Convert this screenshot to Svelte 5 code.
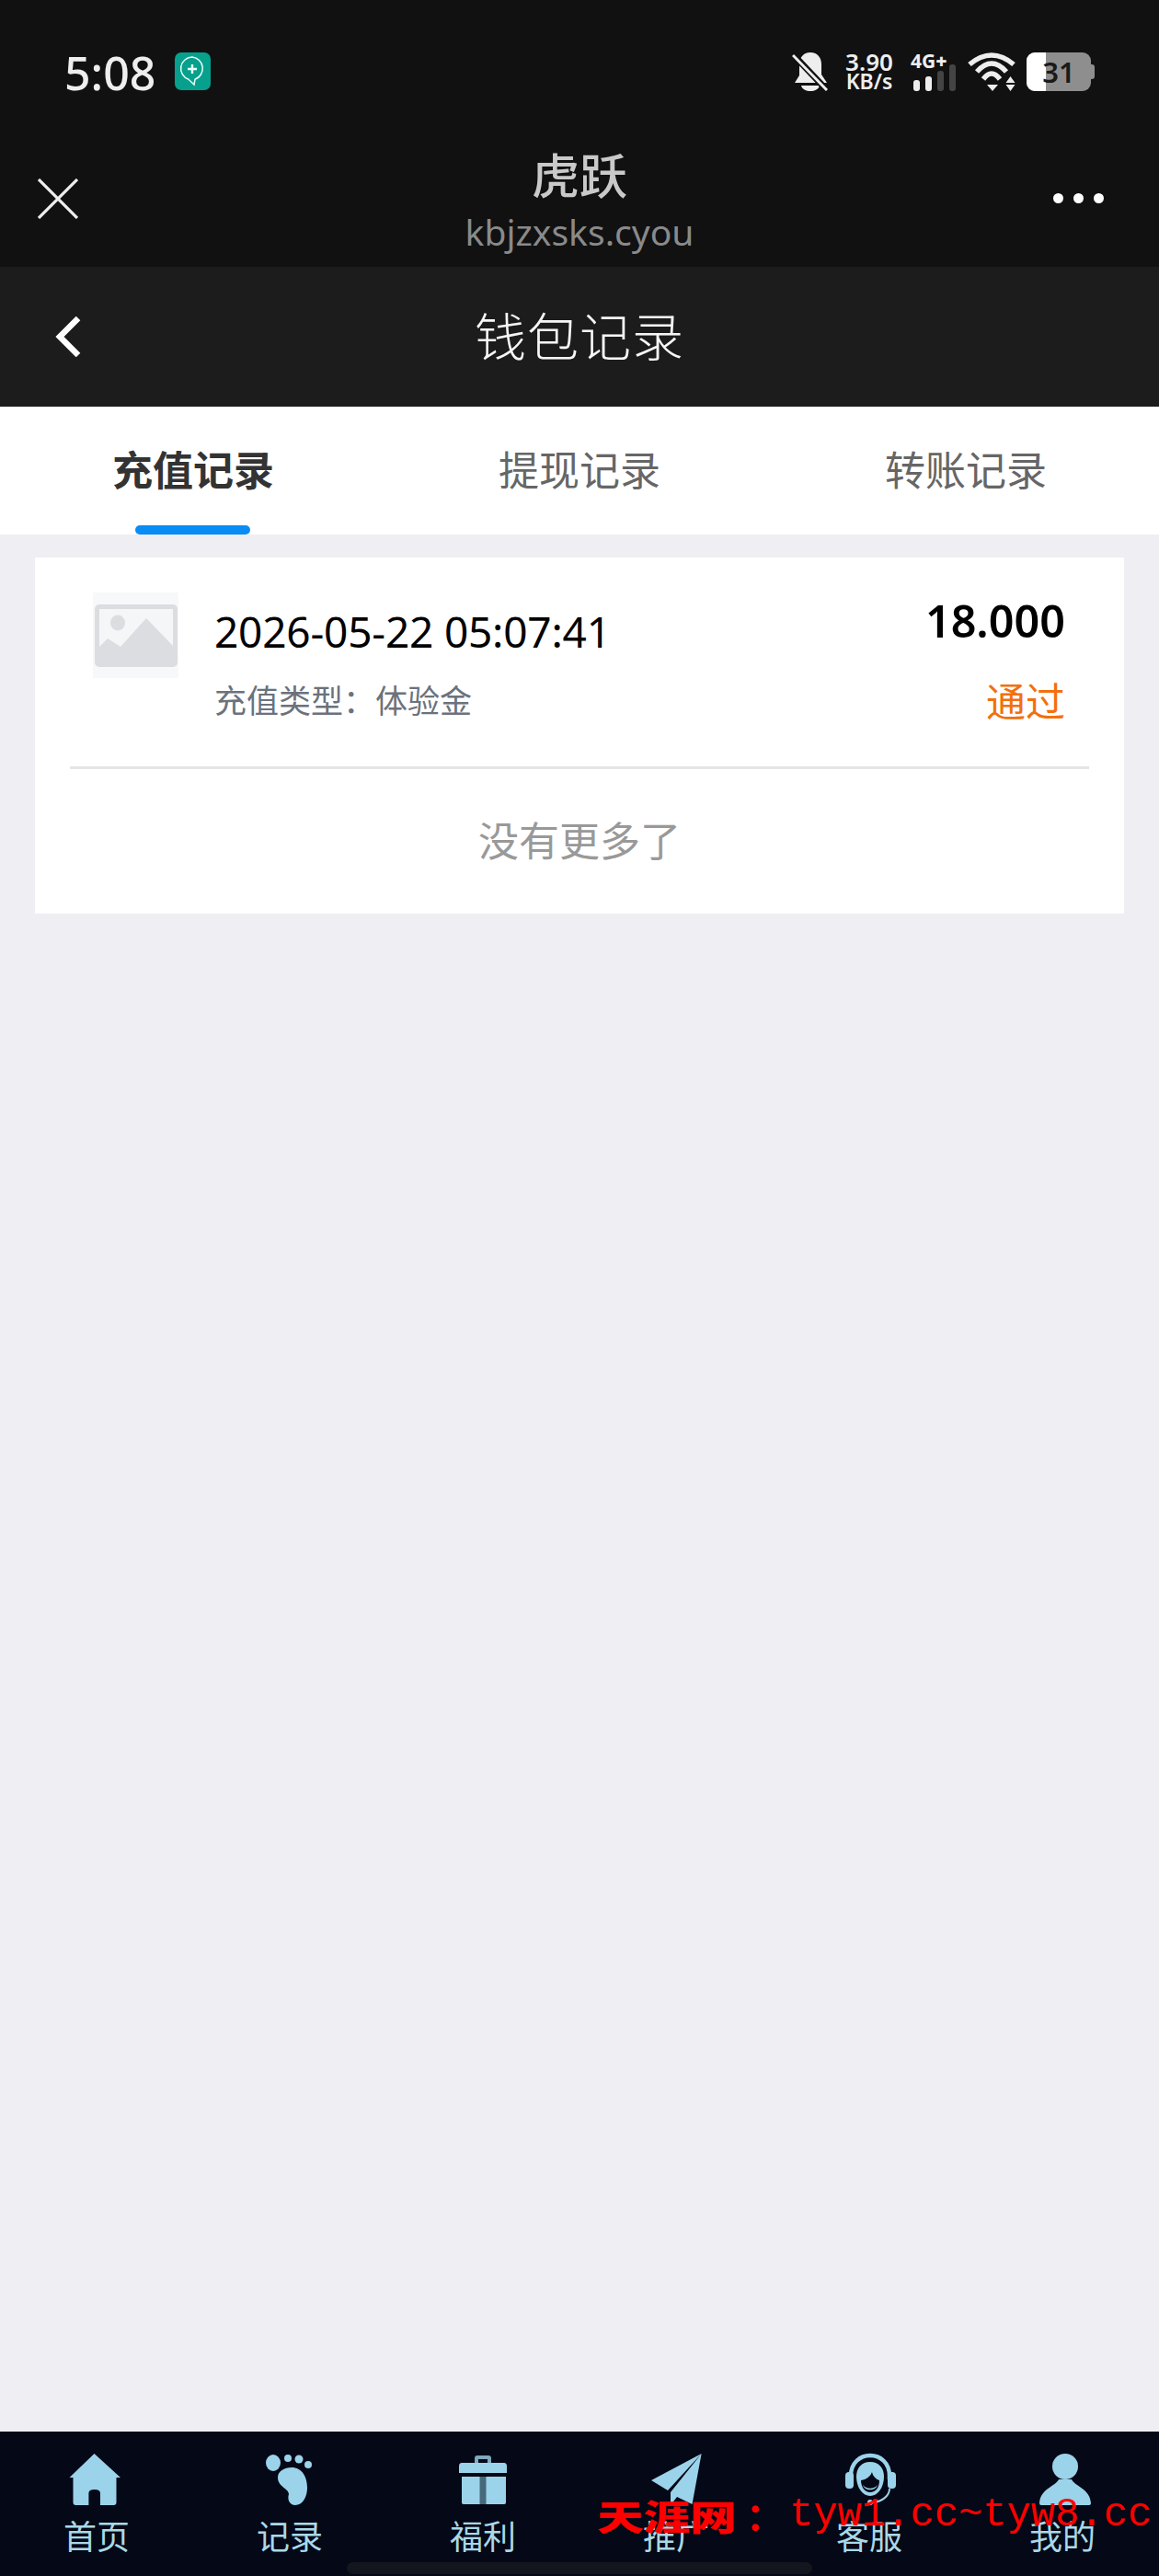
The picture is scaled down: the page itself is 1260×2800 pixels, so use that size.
<script>
  const tabs = [
    { label: "充值记录", active: true },
    { label: "提现记录", active: false },
    { label: "转账记录", active: false },
  ];
  const navItems = ["home", "foot", "gift", "plane", "service", "user"];
  const navLabels = ["首页", "记录", "福利", "推广", "客服", "我的"];
</script>

<div class="page">
  <header class="browser">
    <div class="status">
      <div class="status-left">
        <span class="time">5:08</span>
        <svg class="app-badge" viewBox="0 0 39 41" width="39" height="41">
          <rect width="39" height="41" rx="7" fill="#07a08c" />
          <path d="M19 5a12.500 12.500 0 0 0-4 24.300l6 5.700 1-5.800A12.500 12.500 0 0 0 19 5z" fill="none" stroke="#e8fffb" stroke-width="1.500" />
          <path d="M19 13v10M14 18h10" stroke="#e8fffb" stroke-width="2.400" />
        </svg>
      </div>
      <div class="status-right">
        <svg class="bell" viewBox="0 0 39 42" width="39" height="42">
          <path d="M20 0c8 0 12 6 12 13v11l6 9H3l5-8V13C8 6 12 0 20 0z" fill="#eee" />
          <path d="M10 36h20c-2 8-18 8-20 0z" fill="#eee" />
          <path d="M1 2l37 39" stroke="#111" stroke-width="7" />
          <path d="M1 3l37 38" stroke="#eee" stroke-width="3" />
        </svg>
        <div class="speed"><span class="speed-num">3.90</span><span class="speed-unit">KB/s</span></div>
        <div class="signal">
          <span class="net">4G<b>+</b></span>
          <svg class="bars" viewBox="0 0 49 42" width="49" height="42">
            <rect x="3" y="30" width="7" height="12" rx="3" fill="#eee" />
            <rect x="16" y="26" width="7" height="16" rx="3" fill="#eee" />
            <rect x="29" y="20" width="7" height="22" rx="3" fill="#444" />
            <rect x="42" y="13" width="7" height="29" rx="3" fill="#444" />
          </svg>
        </div>
        <svg class="wifi" viewBox="0 0 52 42" width="52" height="42">
          <path d="M2 13Q26-7 50 13" fill="none" stroke="#eee" stroke-width="5.500" />
          <path d="M10 21Q26 3 42 21" fill="none" stroke="#eee" stroke-width="5.500" />
          <path d="M17 29Q26 17 35 29" fill="none" stroke="#eee" stroke-width="5.500" />
          <path d="M21 35h12l-6 7z" fill="#eee" />
          <path d="M46.500 26l5 7h-10zM41.500 35h10l-5 7z" fill="#eee" />
        </svg>
        <div class="battery">
          <div class="battery-body"><div class="battery-fill"></div><span>31</span></div>
          <div class="battery-cap"></div>
        </div>
      </div>
    </div>
    <div class="browser-bar">
      <svg class="close" viewBox="0 0 44 44" width="44" height="44">
        <path d="M1 1l42 42M43 1L1 43" stroke="#eee" stroke-width="3.200" />
      </svg>
      <div class="site">
        <div class="site-name">虎跃</div>
        <div class="site-url">kbjzxsks.cyou</div>
      </div>
      <div class="dots"><i></i><i></i><i></i></div>
    </div>
  </header>

  <div class="nav-bar">
    <svg class="back" viewBox="0 0 28 44" width="28" height="44">
      <path d="M25 2L5 22l20 20" fill="none" stroke="#fff" stroke-width="6.500" />
    </svg>
    <div class="nav-title">钱包记录</div>
  </div>

  <div class="tabs">
    {#each tabs as tab}
      <div class="tab" class:active={tab.active}>{tab.label}</div>
    {/each}
  </div>

  <main class="content">
    <section class="card">
      <div class="record">
        <div class="thumb">
          <svg viewBox="0 0 90 68" width="90" height="68">
            <rect width="90" height="68" rx="5" fill="#dcdde0" />
            <rect x="5" y="5" width="80" height="50" fill="#f5f6f8" />
            <ellipse cx="25" cy="20" rx="8" ry="8.500" fill="#dcdde0" />
            <path d="M5 46l9-9 14 9L56 15l29 30v15H5z" fill="#dcdde0" />
          </svg>
        </div>
        <div class="info">
          <div class="date">2026-05-22 05:07:41</div>
          <div class="type">充值类型：体验金</div>
        </div>
        <div class="side">
          <div class="amount">18.000</div>
          <div class="state">通过</div>
        </div>
      </div>
      <div class="no-more">没有更多了</div>
    </section>
  </main>

  <footer class="tabbar">
    {#each navItems as item, i}
      <div class="tabbar-item">
        <svg viewBox="0 0 56 56" width="56" height="56">
          {#if item === "home"}
            <path d="M25.500 0L54 26h-4.500v27c0 2-1 3-3 3H32V43Q32 39 25.700 39Q19.400 39 19.400 43V56H5.500c-2 0-3-1-3-3V26H-1.500z" fill="#9bd3ea" />
          {:else if item === "foot"}
            <ellipse cx="10" cy="10" rx="8" ry="9" fill="#9bd3ea" />
            <circle cx="26" cy="5" r="4" fill="#9bd3ea" />
            <circle cx="38" cy="6" r="4.500" fill="#9bd3ea" />
            <circle cx="48" cy="12" r="4" fill="#9bd3ea" />
            <path d="M30 15C41 15 47 25 47 37C47 47 42 56 34 56C28 56 25 50 27 44C27 38 15 36 15 26C15 19 22 15 30 15z" fill="#9bd3ea" />
          {:else if item === "gift"}
            <path d="M19 10V5c0-2 1-3 3-3h12c2 0 3 1 3 3v5h-4V6H23v4z" fill="#7fa9bd" />
            <path d="M2 14c0-3 1-4 3-4h46c2 0 3 1 3 4v7H2z" fill="#9bd3ea" />
            <rect x="5" y="25" width="48" height="30" rx="2" fill="#47697c" />
            <path d="M5 25h19.500v30H7c-1 0-2-1-2-2zM31.500 25H53v28c0 1-1 2-2 2H31.500z" fill="#9bd3ea" />
          {:else if item === "plane"}
            <path d="M55.600 0L1 29l18 11zM55.600 0L22 42v14l7-9 16.500 8z" fill="#9bd3ea" />
          {:else if item === "service"}
            <g transform="translate(2 0)">
              <path d="M6 28V24C6 10 16 2 27 2s21 8 21 22v4" fill="none" stroke="#9bd3ea" stroke-width="4.500" />
              <path d="M27 9c-10 0-15 7-15 16 0 12 7 21 15 21s15-9 15-21c0-9-5-16-15-16z" fill="#9bd3ea" />
              <path d="M17 29c6-1 10-4 12-9 1 5 5 8 8 9 0 8-4 13-10 13s-10-6-10-13z" fill="#050816" />
              <path d="M19 34c4 5 12 5 16 0-2 7-14 7-16 0z" fill="#9bd3ea" />
              <rect x="0" y="20" width="9" height="18" rx="4" fill="#9bd3ea" />
              <rect x="46" y="20" width="9" height="18" rx="4" fill="#9bd3ea" />
              <circle cx="27" cy="53" r="3" fill="#9bd3ea" />
              <path d="M48 38c0 8-8 14-18 15" fill="none" stroke="#9bd3ea" stroke-width="2" />
            </g>
          {:else}
            <circle cx="31" cy="14" r="14" fill="#9bd3ea" />
            <path d="M24 28h14C42 36 58 38 59 54q0 2-2 2H5q-2 0-2-2C4 38 20 36 24 28z" fill="#9bd3ea" />
          {/if}
        </svg>
        <span>{navLabels[i]}</span>
      </div>
    {/each}
    <div class="home-indicator"></div>
    <div class="watermark"><b>天涯网</b><i>：</i><span>tyw1.cc~tyw8.cc</span></div>
  </footer>
</div>

<style>
  :global(body) {
    margin: 0;
    background: #eeeef3;
  }

  .page {
    width: 1260px;
    height: 2800px;
    display: flex;
    flex-direction: column;
    font-family: "Noto Sans CJK SC", "Noto Sans", sans-serif;
    background: #eeeef3;
    overflow: hidden;
  }

  .browser {
    height: 290px;
    background: #111112;
    flex-shrink: 0;
  }

  .status {
    height: 152px;
    display: flex;
    justify-content: space-between;
    padding: 57px 70px 0;
    box-sizing: border-box;
  }

  .status-left {
    display: flex;
    align-items: flex-start;
    gap: 21px;
    height: 42px;
  }

  .time {
    font-family: "Noto Sans", sans-serif;
    font-size: 50px;
    font-weight: 500;
    line-height: 44px;
    color: #eee;
  }

  .status-right {
    display: flex;
    align-items: flex-start;
    height: 42px;
  }

  .status-right svg {
    display: block;
  }

  .speed {
    display: flex;
    flex-direction: column;
    color: #eee;
    font-family: "Noto Sans", sans-serif;
    font-weight: 600;
    align-items: center;
    width: 52px;
    margin-left: 19px;
  }

  .speed-num {
    font-size: 26px;
    line-height: 21px;
  }

  .speed-unit {
    font-size: 23px;
    line-height: 21px;
  }

  .signal {
    position: relative;
    width: 49px;
    height: 42px;
    margin-left: 19px;
  }

  .net {
    font-family: "Noto Sans", sans-serif;
    font-size: 21px;
    font-weight: 700;
    line-height: 18px;
    color: #eee;
    position: absolute;
    left: 0;
    top: 0;
    white-space: nowrap;
  }

  .bars {
    position: absolute;
    left: 0;
    top: 0;
  }

  .wifi {
    margin-left: 13px;
  }

  .battery {
    display: flex;
    align-items: center;
    height: 42px;
    margin-left: 12px;
  }

  .battery-body {
    position: relative;
    width: 70px;
    height: 42px;
    border-radius: 9px;
    background: #8e8e8e;
    overflow: hidden;
    display: flex;
    align-items: center;
    justify-content: center;
  }

  .battery-fill {
    position: absolute;
    left: 0;
    top: 0;
    bottom: 0;
    width: 21px;
    background: #fff;
  }

  .battery-body span {
    position: relative;
    font-family: "Noto Sans", sans-serif;
    font-size: 31px;
    font-weight: 600;
    line-height: 42px;
    color: #1a1a1a;
  }

  .battery-cap {
    width: 4px;
    height: 16px;
    background: #8e8e8e;
    border-radius: 0 3px 3px 0;
  }

  .browser-bar {
    height: 138px;
    position: relative;
    display: flex;
    justify-content: center;
  }

  .close {
    position: absolute;
    left: 41px;
    top: 42px;
  }

  .site {
    text-align: center;
  }

  .site-name {
    font-size: 52px;
    line-height: 60px;
    margin-top: 7px;
    color: #c9c9c9;
    font-weight: 500;
  }

  .site-url {
    font-family: "Noto Sans", sans-serif;
    font-size: 39px;
    line-height: 50px;
    margin-top: 8px;
    color: #8a8a8a;
  }

  .dots {
    position: absolute;
    right: 60px;
    top: 58px;
    display: flex;
    gap: 11px;
  }

  .dots i {
    width: 11px;
    height: 11px;
    border-radius: 50%;
    background: #fff;
  }

  .nav-bar {
    height: 152px;
    background: #1c1c1c;
    flex-shrink: 0;
    display: flex;
    align-items: center;
    justify-content: center;
    position: relative;
  }

  .back {
    position: absolute;
    left: 60px;
    top: 54px;
  }

  .nav-title {
    font-size: 56px;
    font-weight: 300;
    line-height: 76px;
    margin-bottom: 6px;
    color: #f6f6f6;
    letter-spacing: 1px;
  }

  .tabs {
    height: 139px;
    background: #fff;
    display: flex;
    flex-shrink: 0;
  }

  .tab {
    width: 420px;
    display: flex;
    align-items: center;
    justify-content: center;
    font-size: 44px;
    color: #666;
    position: relative;
    padding-bottom: 6px;
    box-sizing: border-box;
  }

  .tab.active {
    color: #333;
    font-weight: 700;
  }

  .tab.active::after {
    content: "";
    position: absolute;
    left: 147px;
    bottom: 0;
    width: 125px;
    height: 10px;
    border-radius: 5px;
    background: #0a8cf5;
  }

  .content {
    flex: 1;
    padding: 25px 38px 0;
  }

  .card {
    background: #fff;
  }

  .record {
    height: 230px;
    margin: 0 38px;
    border-bottom: 3px solid #e5e5e5;
    display: flex;
    padding-top: 38px;
    box-sizing: border-box;
  }

  .thumb {
    width: 93px;
    height: 93px;
    margin-left: 25px;
    background: #f7f8f9;
    display: flex;
    align-items: center;
    justify-content: center;
    flex-shrink: 0;
  }

  .info {
    margin-left: 39px;
    flex: 1;
  }

  .date {
    font-family: "Noto Sans", sans-serif;
    font-size: 46px;
    line-height: 56px;
    color: #000;
    margin-top: 14px;
    letter-spacing: -0.2px;
  }

  .type {
    font-size: 35px;
    line-height: 46px;
    color: #6b727c;
    margin-top: 23px;
  }

  .side {
    text-align: right;
    margin-right: 26px;
  }

  .amount {
    font-family: "Noto Sans", sans-serif;
    font-size: 48.5px;
    font-weight: 600;
    line-height: 58px;
    color: #000;
    margin-top: 1px;
  }

  .state {
    font-size: 43px;
    line-height: 50px;
    margin-top: 32px;
    color: #f2700e;
  }

  .no-more {
    height: 157px;
    padding-bottom: 6px;
    box-sizing: border-box;
    display: flex;
    align-items: center;
    justify-content: center;
    font-size: 44px;
    color: #999;
  }

  .tabbar {
    height: 157px;
    background: #050816;
    flex-shrink: 0;
    display: flex;
    position: relative;
    box-sizing: border-box;
  }

  .tabbar-item {
    width: 210px;
    display: flex;
    flex-direction: column;
    align-items: center;
    padding-top: 24px;
    color: #a9d8e8;
    font-size: 36px;
    line-height: 48px;
  }

  .tabbar-item svg {
    display: block;
    overflow: visible;
    margin-bottom: 8px;
  }

  .home-indicator {
    position: absolute;
    left: 377px;
    width: 506px;
    bottom: 2px;
    height: 13px;
    background: #14161f;
    border-radius: 7px;
  }

  .watermark {
    position: absolute;
    left: 649px;
    top: 62px;
    color: #f00;
    white-space: nowrap;
    display: flex;
    align-items: center;
    height: 56px;
  }

  .watermark b {
    font-family: "Noto Sans CJK SC", serif;
    font-weight: 900;
    font-size: 38px;
    width: 154px;
    display: inline-block;
    transform: scaleX(1.33);
    transform-origin: left center;
  }

  .watermark i {
    font-style: normal;
    font-size: 40px;
    font-weight: 700;
    width: 47px;
    margin-left: 8px;
  }

  .watermark span {
    font-family: "Liberation Mono", monospace;
    font-size: 43.8px;
  }
</style>
